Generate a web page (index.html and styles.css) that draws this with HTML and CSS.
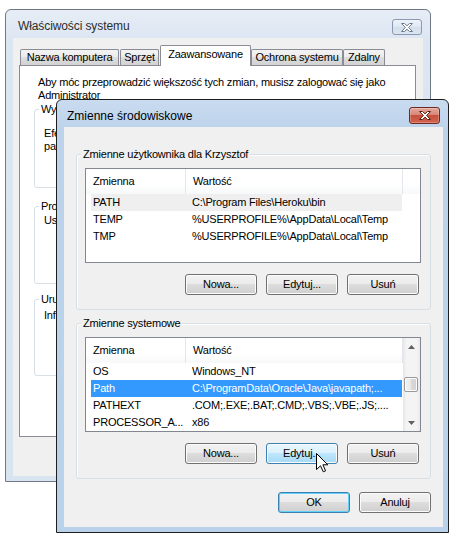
FILE: index.html
```html
<!DOCTYPE html>
<html lang="pl">
<head>
<meta charset="utf-8">
<title>Zmienne środowiskowe</title>
<link rel="stylesheet" href="styles.css">
</head>
<body>
<div class="desk">
  <section class="win back">
    <header class="titlebar">
      <span class="title">Właściwości systemu</span>
      <span class="close close-off">
        <svg width="12" height="9" viewBox="0 0 12 9"><polygon points="0.5,0.5 3.5,0.5 6,2.8 8.5,0.5 11.5,0.5 7.6,4.5 11.5,8.5 8.5,8.5 6,6.2 3.5,8.5 0.5,8.5 4.4,4.5" fill="#fff" stroke="#6f7c8e" stroke-width="1"/></svg>
      </span>
    </header>
    <div class="client back-client">
      <nav class="tabs">
        <span class="tab t-name">Nazwa komputera</span>
        <span class="tab t-hw">Sprzęt</span>
        <span class="tab tab-on t-adv">Zaawansowane</span>
        <span class="tab t-prot">Ochrona systemu</span>
        <span class="tab t-rem">Zdalny</span>
      </nav>
      <div class="panel">
        <p class="note">Aby móc przeprowadzić większość tych zmian, musisz zalogować się jako<br>Administrator</p>
        <div class="bgrp bg1">
          <span class="cap">Wydajność</span>
          <p class="gtext">Efekty wizualne, planowanie procesora, użycie<br>pamięci i pamięć wirtualna</p>
        </div>
        <div class="bgrp bg2">
          <span class="cap">Profile użytkownika</span>
          <p class="gtext">Ustawienia pulpitu związane z logowaniem</p>
        </div>
        <div class="bgrp bg3">
          <span class="cap">Uruchamianie i odzyskiwanie</span>
          <p class="gtext">Informacje o uruchamianiu systemu, awarii systemu i debugowaniu</p>
        </div>
      </div>
    </div>
  </section>

  <section class="win front">
    <header class="titlebar">
      <span class="title">Zmienne środowiskowe</span>
      <span class="close close-on">
        <svg width="12" height="9" viewBox="0 0 12 9"><polygon points="0.5,0.5 3.5,0.5 6,2.8 8.5,0.5 11.5,0.5 7.6,4.5 11.5,8.5 8.5,8.5 6,6.2 3.5,8.5 0.5,8.5 4.4,4.5" fill="#fff" stroke="#5b2118" stroke-width="1"/></svg>
      </span>
    </header>
    <div class="client front-client">
      <div class="fgrp">
        <span class="cap">Zmienne użytkownika dla Krzysztof</span>
        <div class="list">
          <div class="list-main">
            <div class="lhead">
              <span class="lh lh-name">Zmienna</span>
              <span class="lh lh-val">Wartość</span>
              <span class="lh lh-rest"></span>
            </div>
            <div class="row row-dim"><span class="c-name">PATH</span><span class="c-val">C:\Program Files\Heroku\bin</span></div>
            <div class="row"><span class="c-name">TEMP</span><span class="c-val">%USERPROFILE%\AppData\Local\Temp</span></div>
            <div class="row"><span class="c-name">TMP</span><span class="c-val">%USERPROFILE%\AppData\Local\Temp</span></div>
          </div>
        </div>
        <div class="btns">
          <button class="btn">Nowa...</button>
          <button class="btn">Edytuj...</button>
          <button class="btn">Usuń</button>
        </div>
      </div>

      <div class="fgrp">
        <span class="cap">Zmienne systemowe</span>
        <div class="list">
          <div class="list-main">
            <div class="lhead">
              <span class="lh lh-name">Zmienna</span>
              <span class="lh lh-val">Wartość</span>
            </div>
            <div class="row"><span class="c-name">OS</span><span class="c-val">Windows_NT</span></div>
            <div class="row row-sel"><span class="c-name">Path</span><span class="c-val">C:\ProgramData\Oracle\Java\javapath;...</span></div>
            <div class="row"><span class="c-name">PATHEXT</span><span class="c-val">.COM;.EXE;.BAT;.CMD;.VBS;.VBE;.JS;....</span></div>
            <div class="row"><span class="c-name">PROCESSOR_A...</span><span class="c-val">x86</span></div>
          </div>
          <div class="sbar">
            <span class="sb-arrow"><svg width="7" height="4" viewBox="0 0 7 4"><polygon points="0,4 3.5,0 7,4" fill="#606060"/></svg></span>
            <span class="sb-track sb-track-top"></span>
            <span class="sb-thumb"></span>
            <span class="sb-track"></span>
            <span class="sb-arrow"><svg width="7" height="4" viewBox="0 0 7 4"><polygon points="0,0 7,0 3.5,4" fill="#606060"/></svg></span>
          </div>
        </div>
        <div class="btns">
          <button class="btn">Nowa...</button>
          <button class="btn btn-hover">Edytuj...</button>
          <button class="btn">Usuń</button>
        </div>
      </div>

      <div class="dlg-btns">
        <button class="btn btn-default">OK</button>
        <button class="btn">Anuluj</button>
      </div>
    </div>
  </section>

  <svg class="cursor" width="13" height="20" viewBox="0 0 13 20"><polygon points="0.5,0.5 0.5,16.5 4.5,12.8 7.3,18.8 9.6,17.8 6.9,11.8 11.8,11.8" fill="#fff" stroke="#000" stroke-width="1" stroke-linejoin="miter"/></svg>
</div>
</body>
</html>
```
FILE: styles.css
```css
* { box-sizing: border-box; }

body {
  margin: 0;
  background: #fff;
  font-family: "Liberation Sans", Arial, sans-serif;
  font-size: 11px;
  letter-spacing: -0.2px;
  color: #000;
}

.desk {
  position: relative;
  width: 452px;
  height: 539px;
  overflow: hidden;
}

/* ---------- windows ---------- */
.win {
  position: absolute;
  display: flex;
  flex-direction: column;
  border-radius: 6px 6px 0 0;
}

.back {
  left: 5px;
  top: 9px;
  width: 426px;
  height: 473px;
  border: 1px solid #6f7884;
  background: linear-gradient(#e6edf6, #dce6f2 30px, #d9e4f1);
  padding: 0 7px 5px 7px;
}

.front {
  left: 56px;
  top: 99px;
  width: 393px;
  height: 434px;
  border: 1px solid #1e1e1e;
  background: linear-gradient(#c9dbef, #bcd3eb 30px, #b9d1ea);
  padding: 0 5px 5px 7px;
}

.titlebar {
  display: flex;
  justify-content: space-between;
  align-items: flex-start;
  flex: none;
  height: 28px;
}
.front .titlebar { height: 27px; }

.title {
  padding: 9px 0 0 5px;
  line-height: 14px;
  font-size: 12px;
  letter-spacing: -0.1px;
}
.back .title { color: #2c2c2c; }
.front .title { padding-left: 3px; letter-spacing: 0; }

.close {
  display: flex;
  align-items: center;
  justify-content: center;
  width: 30px;
  height: 16px;
  border-radius: 3px;
}
.close-off {
  margin: 9px 1px 0 0;
  border: 1px solid #8b9ab0;
  background: linear-gradient(#eef3f9, #dfe8f2 50%, #d3dfec 50%, #dbe5f0);
}
.close-on {
  margin: 7px 3px 0 0;
  width: 31px;
  height: 17px;
  border: 1px solid #6b2a22;
  background: linear-gradient(#e4a99d, #d88576 45%, #c5503e 50%, #d2634f);
  box-shadow: inset 0 0 0 1px rgba(255, 255, 255, 0.25);
}

.client {
  flex: 1;
  background: #f0f0f0;
}

/* ---------- back window ---------- */
.back-client {
  padding: 7px 7px 0 6px;
}

.tabs {
  display: flex;
  align-items: flex-end;
  height: 20px;
  padding-left: 1px;
  position: relative;
  z-index: 1;
}

.tab {
  height: 16px;
  line-height: 15px;
  text-align: center;
  border: 1px solid #898c95;
  border-bottom: none;
  border-radius: 2px 2px 0 0;
  background: linear-gradient(#f3f3f3, #ebebeb 50%, #dedede 50%, #d2d2d2);
  white-space: nowrap;
}
.t-name { width: 99px; margin-right: 1px; }
.t-hw { width: 39px; margin-right: 1px; }
.t-adv { width: 91px; }
.t-prot { width: 92px; }
.t-rem { width: 42px; }

.tab-on {
  height: 21px;
  margin-bottom: -1px;
  padding-top: 1px;
  background: #fff;
}

.panel {
  height: 372px;
  background: #fff;
  border: 1px solid #898c95;
  padding: 10px 14px 0 14px;
}

.note {
  margin: 0 0 0 4px;
  line-height: 13px;
}

.bgrp {
  position: relative;
  border: 1px solid #d5dfe5;
  border-radius: 3px;
  padding-left: 9px;
}

.bg1 { height: 79px; margin-top: 7px; padding-top: 17px; }
.bg2 { height: 78px; margin-top: 18px; padding-top: 7px; }
.bg3 { height: 77px; margin-top: 15px; padding-top: 9px; }

.gtext {
  margin: 0;
  line-height: 13px;
}

.cap {
  position: absolute;
  top: -8px;
  left: 4px;
  padding: 0 2px;
  line-height: 14px;
  white-space: nowrap;
}
.bgrp .cap { background: #fff; }

/* ---------- front window ---------- */
.front-client {
  display: flex;
  flex-direction: column;
  padding: 27px 12px 14px 12px;
}

.fgrp {
  position: relative;
  height: 156px;
  border: 1px solid #d5dfe5;
  border-radius: 3px;
  box-shadow: inset 1px 1px 0 #fff;
  padding: 13px 9px 0 8px;
}
.fgrp + .fgrp { margin-top: 13px; }
.fgrp .cap { background: #f0f0f0; }

.list {
  display: flex;
  height: 95px;
  border: 1px solid #828790;
  background: #fff;
  overflow: hidden;
}

.list-main {
  flex: 1;
  min-width: 0;
}

.lhead {
  display: flex;
  height: 25px;
}

.lh {
  line-height: 25px;
  padding-left: 7px;
  border-right: 1px solid #e3e6ea;
  background: linear-gradient(#fff, #fff 60%, #f7f8f9);
}
.lh-name { width: 100px; }
.lh-val { width: 217px; }
.lh-rest { flex: 1; border-right: none; }

.row {
  display: flex;
  width: 311px;
  height: 17px;
  margin-left: 5px;
  line-height: 17px;
  white-space: nowrap;
}
.row-dim { background: #efefef; }
.row-sel { background: #3399ff; color: #fff; }

.c-name {
  width: 101px;
  padding-left: 2px;
  overflow: hidden;
}
.c-val {
  flex: 1;
  overflow: hidden;
}

.sbar {
  display: flex;
  flex-direction: column;
  width: 17px;
  background: linear-gradient(90deg, #e6e6e6, #f4f4f4 20%, #f4f4f4 80%, #e9e9e9);
}
.sb-arrow {
  display: flex;
  align-items: center;
  justify-content: center;
  height: 17px;
  flex: none;
}
.sb-track-top { height: 13px; flex: none; }
.sb-track { flex: 1; }
.sb-thumb {
  flex: none;
  height: 15px;
  margin: 0 2px 0 1px;
  border: 1px solid #999;
  border-radius: 2px;
  background: linear-gradient(90deg, #f3f3f3, #e8e8e8 50%, #d9d9d9 50%, #d2d2d2);
  box-shadow: inset 0 0 0 1px #fbfbfb;
}

.btns {
  display: flex;
  justify-content: flex-end;
  gap: 9px;
  margin-top: 11px;
  padding-right: 2px;
}

.btn {
  width: 72px;
  height: 21px;
  padding: 0;
  border: 1px solid #707070;
  border-radius: 3px;
  background: linear-gradient(#f2f2f2, #ebebeb 50%, #dddddd 50%, #cfcfcf);
  box-shadow: inset 0 0 0 1px #fcfcfc;
  font: inherit;
  letter-spacing: inherit;
  color: #000;
  line-height: 19px;
  text-align: center;
}

.btn-hover {
  border-color: #3c7fb1;
  background: linear-gradient(#eaf6fd, #d9f0fc 50%, #bee6fd 50%, #a7d9f5);
}

.btn-default {
  border-color: #3c7fb1;
  box-shadow: inset 0 0 0 1px #62d0f8;
}

.dlg-btns {
  display: flex;
  justify-content: flex-end;
  gap: 9px;
  margin-top: 13px;
}

.cursor {
  position: absolute;
  left: 316px;
  top: 453px;
}
```
